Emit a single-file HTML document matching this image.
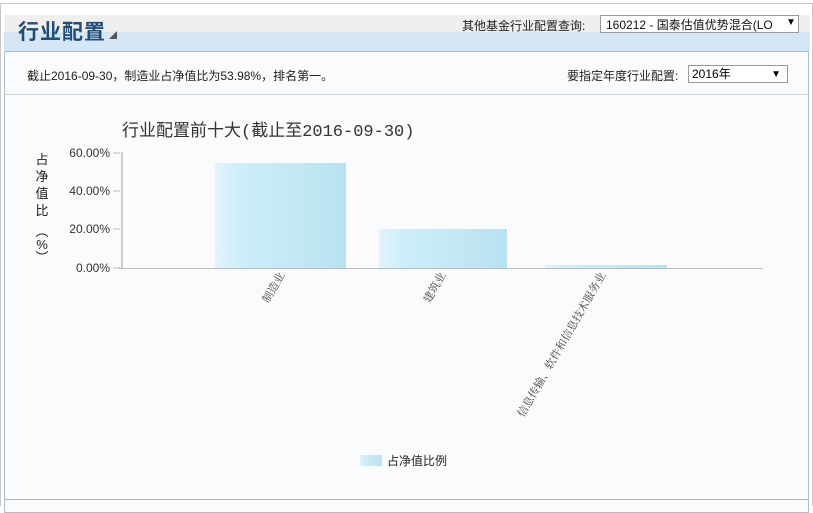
<!DOCTYPE html>
<html><head><meta charset="utf-8"><style>
body{margin:0;width:813px;height:505px;background:#fff;font-family:"Liberation Sans","Noto Sans CJK SC",sans-serif;position:relative;overflow:hidden}
.a{position:absolute}
</style></head><body>
<div class="a" style="left:0;top:3px;width:811px;height:502px;border:1px solid #c8c8c8;border-bottom:none;background:#fff"></div>
<div class="a" style="left:4px;top:15px;width:806px;height:17px;background:#efefef"></div>
<div class="a" style="left:4px;top:32px;width:806px;height:19px;background:#d5e6f5"></div>
<div class="a" style="left:18px;top:16px;font-size:21px;color:#1f4e79;font-weight:bold;letter-spacing:1px">行业配置</div>
<div class="a" style="left:109px;top:30px;font-size:8px;color:#555">◢</div>
<div class="a" style="left:462px;top:17px;font-size:12px;color:#222">其他基金行业配置查询:</div>
<div class="a" style="left:600px;top:15px;width:199px;height:18px;border:1px solid #999;background:#fff;font-size:12px;line-height:18px;color:#111;box-sizing:border-box;padding-left:5px;white-space:nowrap;overflow:hidden">160212 - 国泰估值优势混合(LO</div>
<div class="a" style="left:786px;top:17px;font-size:10px;background:#fff;width:12px">▼</div>
<div class="a" style="left:4px;top:51px;width:803px;height:460px;border:1px solid #a9bfd6;background:#fafbfd"></div>
<div class="a" style="left:5px;top:94px;width:803px;height:1px;background:#c8d4e0"></div>
<div class="a" style="left:27px;top:67px;font-size:12px;color:#222">截止2016-09-30，制造业占净值比为53.98%，排名第一。</div>
<div class="a" style="left:567px;top:67px;font-size:12px;color:#222">要指定年度行业配置:</div>
<div class="a" style="left:688px;top:65px;width:100px;height:18px;border:1px solid #999;background:#fff;font-size:12px;line-height:17px;box-sizing:border-box;padding-left:3px">2016年<span style="position:absolute;right:6px;font-size:10px">▼</span></div>
<div class="a" style="left:5px;top:499px;width:803px;height:1px;background:#b0b0b0"></div>
<svg class="a" style="left:0;top:0" width="813" height="505">
<defs><linearGradient id="g" x1="0" x2="1"><stop offset="0" stop-color="#e3f3fb"/><stop offset="0.2" stop-color="#cdeef8"/><stop offset="0.6" stop-color="#c4e8f3"/><stop offset="1" stop-color="#b6e2f0"/></linearGradient></defs>
<text x="122" y="136" font-size="17" fill="#333" font-family="Liberation Mono,Noto Sans CJK SC,monospace">行业配置前十大(截止至2016-09-30)</text>
<line x1="122" y1="152" x2="122" y2="268" stroke="#ccc" stroke-width="2"/>
<line x1="118" y1="268.5" x2="763" y2="268.5" stroke="#bbb"/>
<g stroke="#bbb"><line x1="113" y1="153" x2="120" y2="153"/><line x1="113" y1="191" x2="120" y2="191"/><line x1="113" y1="229" x2="120" y2="229"/><line x1="113" y1="268" x2="120" y2="268"/></g>
<g font-size="12" fill="#333" text-anchor="end"><text x="110" y="157">60.00%</text><text x="110" y="195">40.00%</text><text x="110" y="233">20.00%</text><text x="110" y="272">0.00%</text></g>
<g font-size="13" fill="#222" text-anchor="middle"><text x="42" y="164">占</text><text x="42" y="181">净</text><text x="42" y="198">值</text><text x="42" y="215">比</text><text x="42" y="236">︵</text><text x="42" y="249">%</text><text x="42" y="262">︶</text></g>
<rect x="215" y="163" width="131" height="105" fill="url(#g)"/>
<rect x="379" y="229" width="128" height="39" fill="url(#g)"/>
<rect x="545" y="265" width="122" height="3" fill="url(#g)"/>
<g font-size="11" fill="#444" font-family="Liberation Serif,Noto Serif CJK SC,serif" text-anchor="end">
<text transform="translate(285,275) rotate(-60)">制造业</text>
<text transform="translate(446,275) rotate(-60)">建筑业</text>
<text transform="translate(606,275) rotate(-60)">信息传输、软件和信息技术服务业</text>
</g>
<rect x="360" y="455" width="22" height="11" fill="url(#g)"/>
<text x="387" y="465" font-size="12" fill="#222">占净值比例</text>
</svg>
</body></html>
